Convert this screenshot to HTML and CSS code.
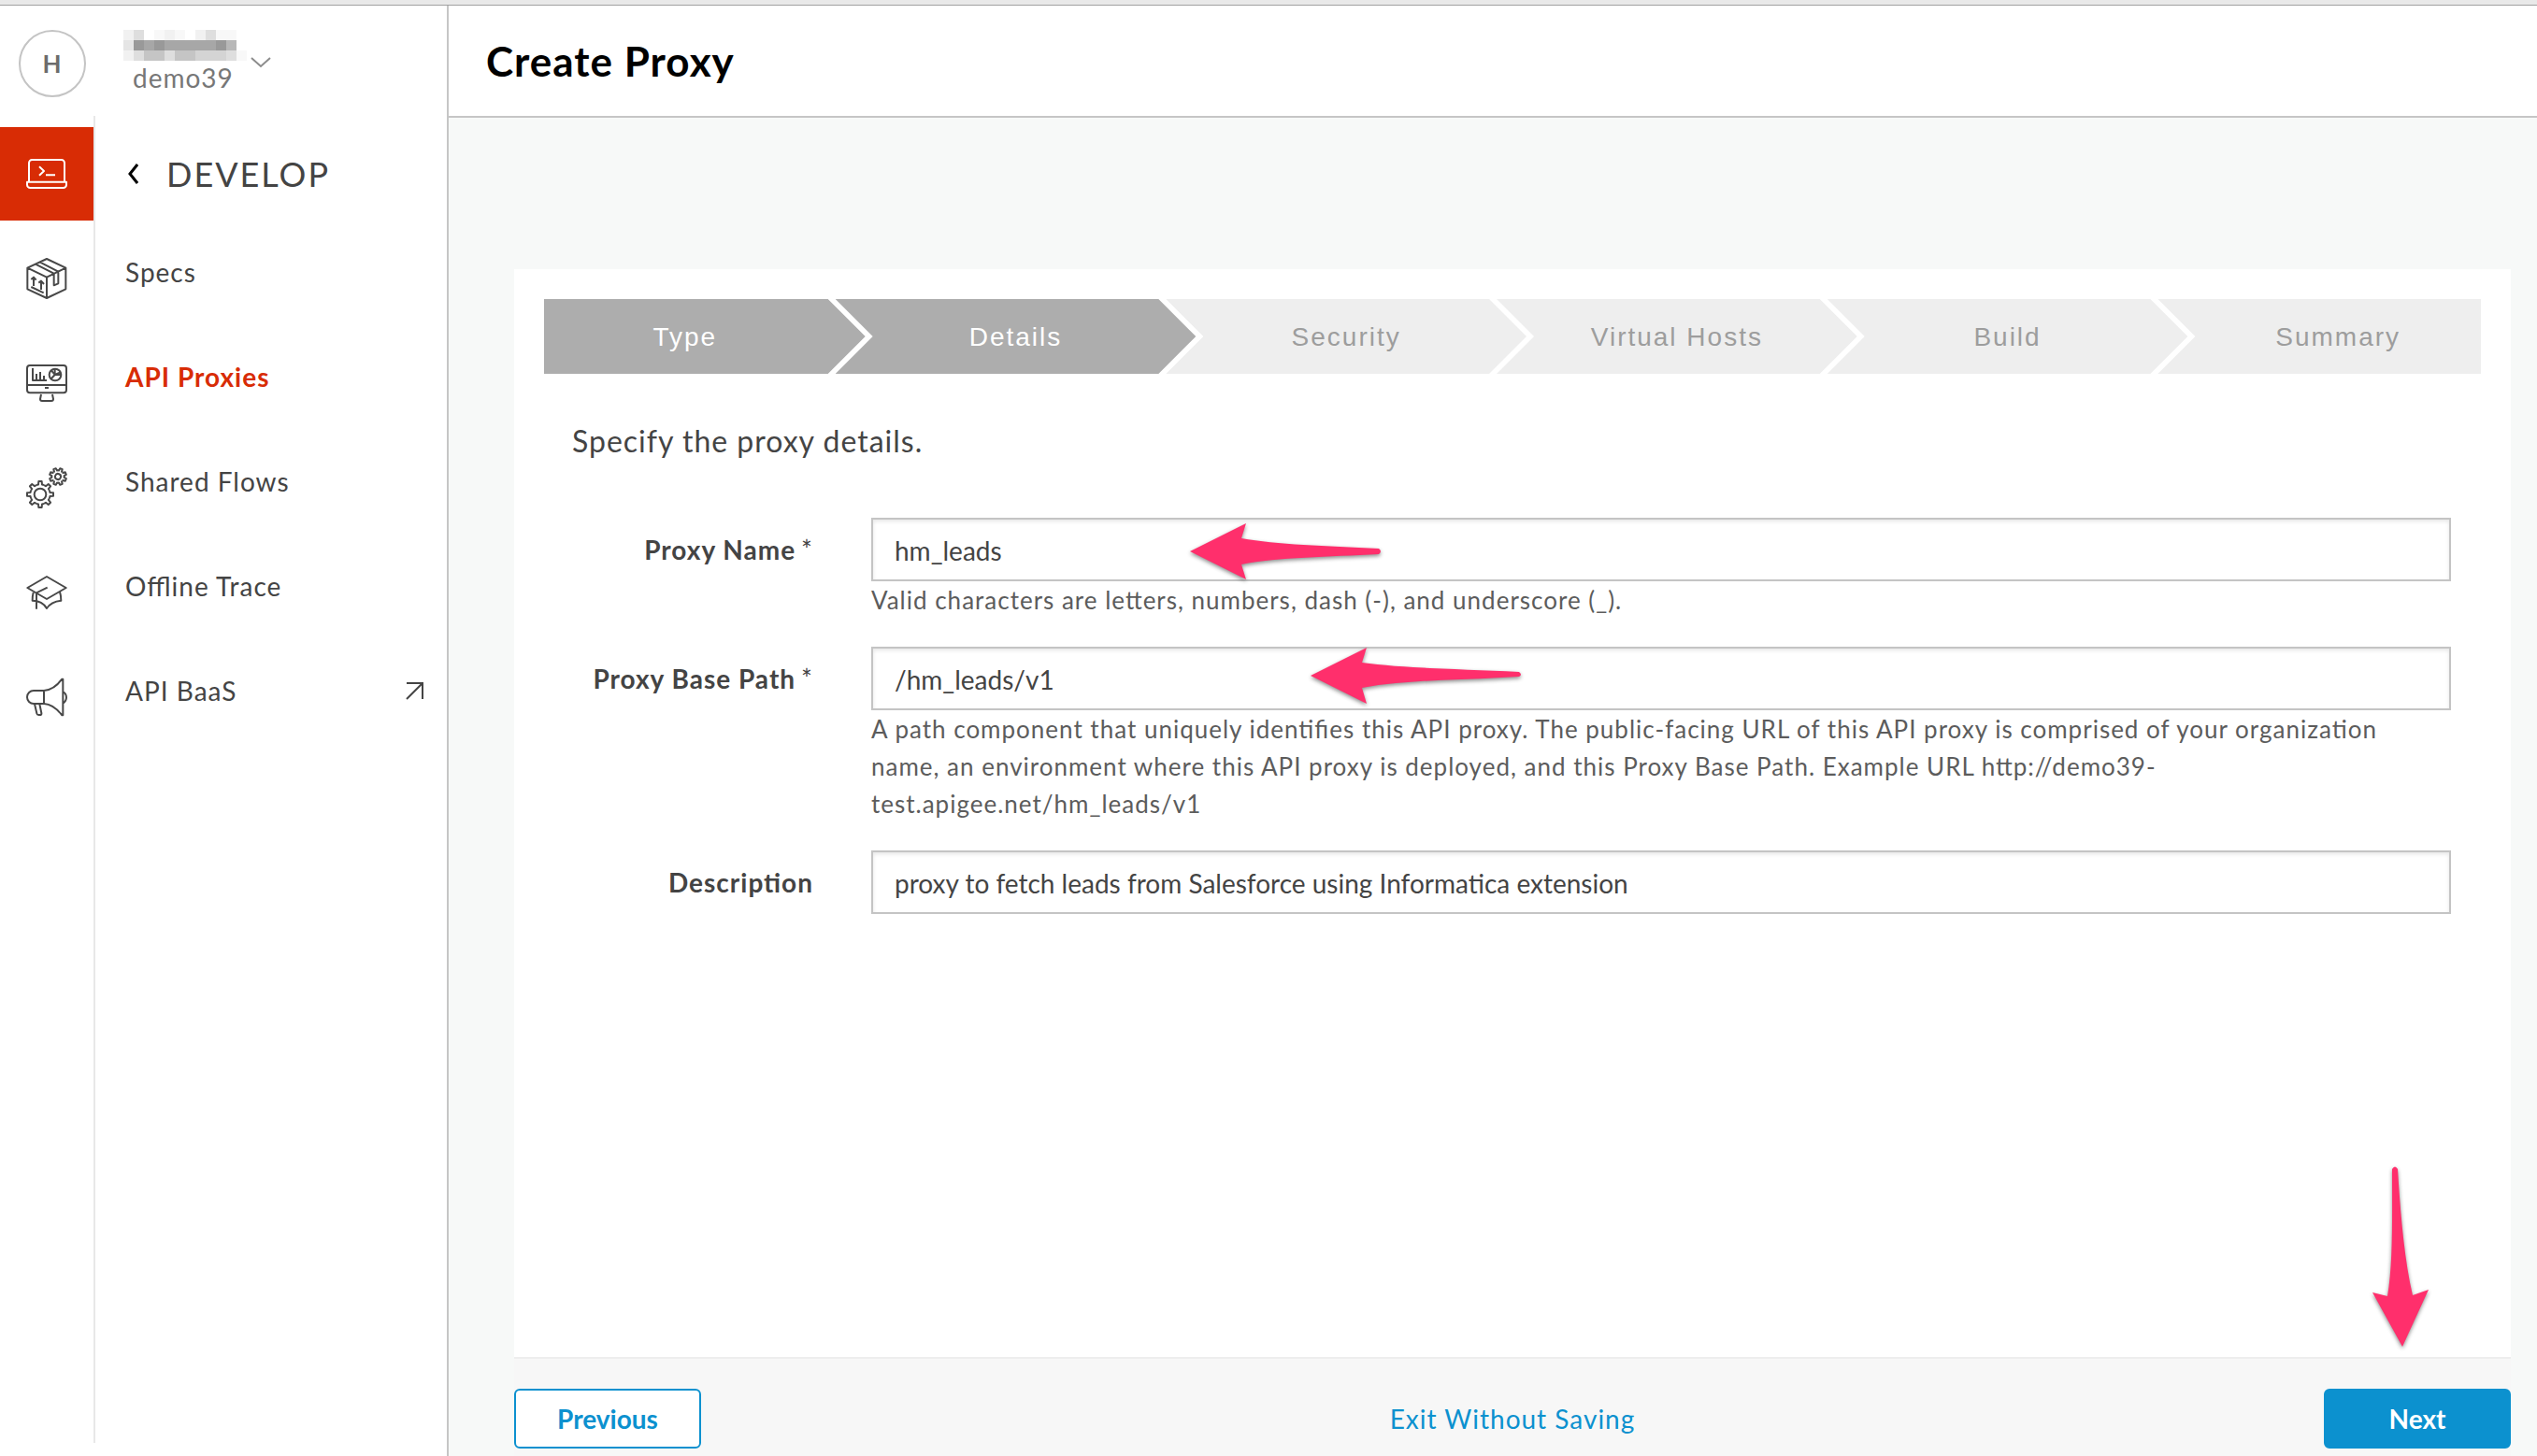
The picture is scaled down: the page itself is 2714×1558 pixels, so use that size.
FILE: index.html
```html
<!DOCTYPE html>
<html lang="en">
<head>
<meta charset="utf-8">
<title>Create Proxy</title>
<link rel="stylesheet" href="styles.css">
</head>
<body>
<div class="window-edge"></div>
<div class="app">
  <aside class="sidebar">
    <div class="account">
      <span class="avatar">H</span>
      <button class="org" type="button" aria-label="Switch organization">
        <span class="org-text">
          <svg class="redacted" viewBox="0 0 12 3" shape-rendering="crispEdges" aria-hidden="true">
            <path fill="#f1f1f1" d="M0 0h1v1H0zM4 0h1v1H4zM7 0h1v1H7zM0 2h1v1H0z"/>
            <path fill="#dedede" d="M1 0h1v1H1zM1 2h1v1H1zM4 2h1v1H4zM8 0h1v1H8zM10 2h1v1h-1z"/>
            <path fill="#f8f8f8" d="M3 0h1v1H3zM5 0h1v1H5zM9 0h2v1H9zM11 2h1v1h-1z"/>
            <path fill="#e5e5e5" d="M0 1h1v1H0z"/>
            <path fill="#999" d="M1 1h1v1H1zM3 1h1v1H3zM9 1h1v1H9z"/>
            <path fill="#a7a7a7" d="M2 1h1v1H2zM4 1h5v1H4z"/>
            <path fill="#b8b8b8" d="M10 1h1v1h-1z"/>
            <path fill="#c5c5c5" d="M2 2h2v1H2zM5 2h2v1H5z"/>
            <path fill="#d4d4d4" d="M7 2h3v1H7z"/>
          </svg>
          <span class="org-name">demo39</span>
        </span>
        <svg class="caret" viewBox="0 0 22 12" aria-hidden="true"><path d="M1 1l10 9 10-9"/></svg>
      </button>
    </div>
    <div class="navigation">
      <nav class="rail" aria-label="Sections">
        <a class="rail-link active" href="#develop" aria-label="Develop">
          <svg class="icon" viewBox="0 0 132 132"><path d="M9 92V31a10 10 0 0 1 10-10h94a10 10 0 0 1 10 10v61M3 92h126v9a10 10 0 0 1-10 10H13a10 10 0 0 1-10-10zM42 43l15 14-15 14M63 70h30"/></svg>
        </a>
        <a class="rail-link" href="#publish" aria-label="Publish">
          <svg class="icon" viewBox="0 0 132 132"><path d="M66 3l61 29v68l-61 29-62-29V32zM4 32l62 30 61-30M66 62v67M30 20l59 30v38l14-6V44L45 14M24 90V62M16 69l8-7 8 9M48 102V74M40 80l8-6 9 10M16 93l40 19"/></svg>
        </a>
        <a class="rail-link" href="#analyze" aria-label="Analyze">
          <svg class="icon" viewBox="0 0 132 132"><path d="M12 9h108a9 9 0 0 1 9 9v70a9 9 0 0 1-9 9H12a9 9 0 0 1-9-9V18a9 9 0 0 1 9-9zM3 72h126M60 81h12M48 102l-3 15q0 6 6 6h30q6 0 6-6l-3-15M21 18v39h45M33 57V36M45 57V30M57 57V42"/><circle cx="93" cy="39" r="19"/><path d="M92 20v19l-13 14M92 39l-11-14M92 39l18-8M92 39h19"/></svg>
        </a>
        <a class="rail-link" href="#admin" aria-label="Admin">
          <svg class="icon" viewBox="0 0 132 132">
            <defs>
              <path id="tooth-large" d="M-12.2-29.6A32 32 0 0 1-6-31.4L-5-42H5L6-31.4A32 32 0 0 1 12.2-29.6"/>
              <path id="tooth-small" d="M-7.7-18.5A20 20 0 0 1-5-19.4L-4-27H4L5-19.4A20 20 0 0 1 7.7-18.5"/>
            </defs>
            <g transform="translate(45 87)">
              <circle r="19"/>
              <use href="#tooth-large"/><use href="#tooth-large" transform="rotate(45)"/><use href="#tooth-large" transform="rotate(90)"/><use href="#tooth-large" transform="rotate(135)"/><use href="#tooth-large" transform="rotate(180)"/><use href="#tooth-large" transform="rotate(225)"/><use href="#tooth-large" transform="rotate(270)"/><use href="#tooth-large" transform="rotate(315)"/>
            </g>
            <g transform="translate(102 30) rotate(22.5)">
              <circle r="9"/>
              <use href="#tooth-small"/><use href="#tooth-small" transform="rotate(45)"/><use href="#tooth-small" transform="rotate(90)"/><use href="#tooth-small" transform="rotate(135)"/><use href="#tooth-small" transform="rotate(180)"/><use href="#tooth-small" transform="rotate(225)"/><use href="#tooth-small" transform="rotate(270)"/><use href="#tooth-small" transform="rotate(315)"/>
            </g>
          </svg>
        </a>
        <a class="rail-link" href="#learn" aria-label="Learn">
          <svg class="icon" viewBox="0 0 132 132"><path d="M66 15l62 36-62 36L4 51zM68 50L33 67v52M23 66q-3 10-3 26 32 0 46 25 14-22 46-25 0-16-4-28"/></svg>
        </a>
        <a class="rail-link" href="#news" aria-label="News">
          <svg class="icon" viewBox="0 0 132 132"><path d="M57 45H24a21 21 0 0 0 0 42h33zM57 45q32-2 58-37h3v116h-3q-28-36-58-37M118 48q11 7 11 19t-11 19M27 88l7 30q1 5 6 5h4q6 0 5-6l-6-29"/></svg>
        </a>
      </nav>
      <nav class="menu" aria-label="Develop">
        <a class="menu-heading" href="#home">
          <svg class="back" viewBox="0 0 14 22" aria-hidden="true"><path d="M13 1L5 11l8 10"/></svg>
          DEVELOP
        </a>
        <a class="menu-link" href="#specs">Specs</a>
        <a class="menu-link current" href="#proxies">API Proxies</a>
        <a class="menu-link" href="#flows">Shared Flows</a>
        <a class="menu-link" href="#trace">Offline Trace</a>
        <a class="menu-link" href="#baas">API BaaS
          <svg class="external" viewBox="0 0 20 20" aria-hidden="true"><path d="M1 2h17v17M18 2L1 19"/></svg>
        </a>
      </nav>
    </div>
  </aside>

  <main class="main">
    <header class="title-bar"><h1>Create Proxy</h1></header>
    <form class="wizard">
      <section class="panel">
        <div class="steps-frame">
          <ol class="steps">
            <li class="step done">Type</li>
            <li class="step done">Details</li>
            <li class="step">Security</li>
            <li class="step">Virtual Hosts</li>
            <li class="step">Build</li>
            <li class="step">Summary</li>
          </ol>
        </div>
        <h2>Specify the proxy details.</h2>
        <div class="fields">
          <label for="name">Proxy Name<span class="required">*</span></label>
          <div class="control">
            <input id="name" type="text" value="hm_leads">
            <p>Valid characters are letters, numbers, dash (-), and underscore (_).</p>
            <svg class="pointer pointer-name" viewBox="0 0 206 62" aria-hidden="true"><path d="M0 31L60 1l-5 16c38 7 90 8 147 11q4 3 0 6c-54 3-107 3-147 11l5 16z"/></svg>
          </div>
          <label for="path">Proxy Base Path<span class="required">*</span></label>
          <div class="control">
            <input id="path" type="text" value="/hm_leads/v1">
            <p>A path component that uniquely identifies this API proxy. The public-facing URL of this API proxy is comprised of your organization name, an environment where this API proxy is deployed, and this Proxy Base Path. Example URL http://demo39-test.apigee.net/hm_leads/v1</p>
            <svg class="pointer pointer-path" viewBox="0 0 228 62" aria-hidden="true"><path d="M0 31L60 1l-5 16c42 6 107 7 168 10q4 3 0 5c-60 4-120 3-168 12l5 17z"/></svg>
          </div>
          <label for="description">Description</label>
          <div class="control">
            <input id="description" type="text" value="proxy to fetch leads from Salesforce using Informatica extension">
          </div>
        </div>
        <svg class="pointer pointer-next" viewBox="0 0 60 194" aria-hidden="true"><path d="M21 4q3-5 6 0c3 48 7 96 16 135l17-6-28 61L0 136l16 4c6-35 5-80 5-136z"/></svg>
      </section>
      <footer class="actions">
        <button class="button" type="button">Previous</button>
        <a class="exit" href="#exit">Exit Without Saving</a>
        <button class="button primary" type="submit">Next</button>
      </footer>
    </form>
  </main>
</div>
</body>
</html>
```
FILE: styles.css
```css
* { box-sizing: border-box; }

body {
  margin: 0;
  min-height: 100vh;
  display: flex;
  flex-direction: column;
  background: #f7f9f8;
  color: #444;
  font: 28px/40px Lato, "Liberation Sans", sans-serif;
  letter-spacing: 1px;
  font-feature-settings: "liga" 1;
}

a { color: inherit; text-decoration: none; }
svg { display: block; fill: none; stroke: currentColor; flex: none; }
h1, h2, p, ol { margin: 0; padding: 0; }

.window-edge { height: 6px; background: #e9e9e9; border-bottom: 1px solid #a0a0a0; }
.app { flex: 1; display: flex; }

/* Sidebar */
.sidebar {
  width: 480px;
  flex: none;
  display: flex;
  flex-direction: column;
  background: #fff;
  border-right: 2px solid #c6c6c6;
}
.account { height: 118px; display: flex; align-items: flex-start; padding: 26px 20px 0; gap: 40px; }
.avatar {
  width: 72px;
  height: 72px;
  border: 2px solid #c4c4c4;
  border-radius: 50%;
  display: flex;
  align-items: center;
  justify-content: center;
  font-size: 26px;
  font-weight: 700;
  color: #6c6c6c;
}
.org {
  display: flex;
  align-items: center;
  gap: 4px;
  padding: 0;
  border: 0;
  background: none;
  font: inherit;
  letter-spacing: inherit;
  color: #777;
}
.org-text { display: flex; flex-direction: column; text-align: left; }
.redacted { width: 132px; height: 33px; stroke: none; }
.org-name { padding-left: 10px; line-height: 36px; }
.caret { width: 22px; height: 12px; stroke: #8c8c8c; stroke-width: 2; }

.navigation { flex: 1; display: flex; margin-bottom: 14px; }
.rail { width: 102px; border-right: 2px solid #e8e8e8; padding-top: 12px; display: flex; flex-direction: column; gap: 12px; }
.rail-link { height: 100px; display: flex; align-items: center; justify-content: center; color: #484848; }
.rail-link.active { background: #d82c05; color: #fff; }
.icon { width: 44px; height: 44px; stroke-width: 6; stroke-linejoin: round; }

.menu { flex: 1; padding: 12px 24px 0 32px; }
.menu-heading { height: 100px; display: flex; align-items: center; gap: 30px; font-size: 36px; letter-spacing: 2px; }
.back { width: 14px; height: 22px; stroke: #000; stroke-width: 3; }
.menu-link { height: 112px; padding-bottom: 2px; display: flex; align-items: center; justify-content: space-between; }
.menu-link.current { color: #d82c05; font-weight: 700; }
.external { width: 20px; height: 20px; stroke-width: 2; }

/* Main column */
.main { flex: 1; min-width: 0; display: flex; flex-direction: column; }
.title-bar { height: 120px; display: flex; align-items: center; padding: 0 40px; background: #fff; border-bottom: 2px solid #c6c6c6; }
h1 { font-size: 44px; line-height: 64px; color: #000; letter-spacing: 1px; }

.wizard { flex: 1; display: flex; flex-direction: column; padding: 162px 28px 0 70px; }
.panel { flex: 1; position: relative; padding: 32px; background: #fff; border-bottom: 2px solid #eee; }

.steps-frame { overflow: hidden; }
.steps { display: flex; margin: 0 -40px 0 -42px; list-style: none; }
.step {
  flex: 1 1 0;
  height: 80px;
  padding-top: 2px;
  display: flex;
  align-items: center;
  justify-content: center;
  background: #eee;
  color: #9d9d9d;
  font-family: "Liberation Sans", sans-serif;
  letter-spacing: 2px;
  clip-path: polygon(0 0, calc(100% - 40px) 0, 100% 50%, calc(100% - 40px) 100%, 0 100%, 40px 50%);
}
.step + .step { margin-left: -32px; }
.step.done { background: #adadad; color: #fff; }

h2 { padding: 48px 32px 0 30px; font-size: 32px; line-height: 48px; font-weight: 400; letter-spacing: 1px; }

.fields { display: grid; grid-template-columns: 288px 1fr; column-gap: 62px; row-gap: 30px; padding: 58px 32px 0 0; }
label { padding-top: 14px; text-align: right; font-weight: 700; }
.required { padding-left: 6px; font-weight: 400; }
.control { position: relative; }
input {
  display: block;
  width: 100%;
  height: 68px;
  padding: 2px 23px 0;
  border: 2px solid #c4c4c4;
  box-shadow: inset 0 2px 4px rgba(0, 0, 0, .1);
  background: #fff;
  color: #444;
  font: inherit;
}
.control p { font-size: 26px; color: #5c5c5c; }

/* Annotation arrows */
.pointer { position: absolute; fill: #ff2f6c; stroke: none; overflow: visible; filter: drop-shadow(0 2px 2px rgba(0, 0, 0, .45)); }
.pointer-name { left: 341px; top: 5px; width: 206px; height: 62px; }
.pointer-path { left: 470px; top: 0; width: 228px; height: 62px; }
.pointer-next { right: 88px; bottom: 11px; width: 60px; height: 194px; }

.actions { display: grid; grid-template-columns: 200px 1fr 200px; align-items: center; padding: 32px 0 8px; background: #f7f7f7; }
.button {
  height: 64px;
  border: 2px solid #0c91cf;
  border-radius: 6px;
  background: #fff;
  color: #0c91cf;
  font: inherit;
  font-weight: 700;
}
.button.primary { background: #0c91cf; color: #fff; }
.exit { justify-self: center; color: #0c91cf; }
```
